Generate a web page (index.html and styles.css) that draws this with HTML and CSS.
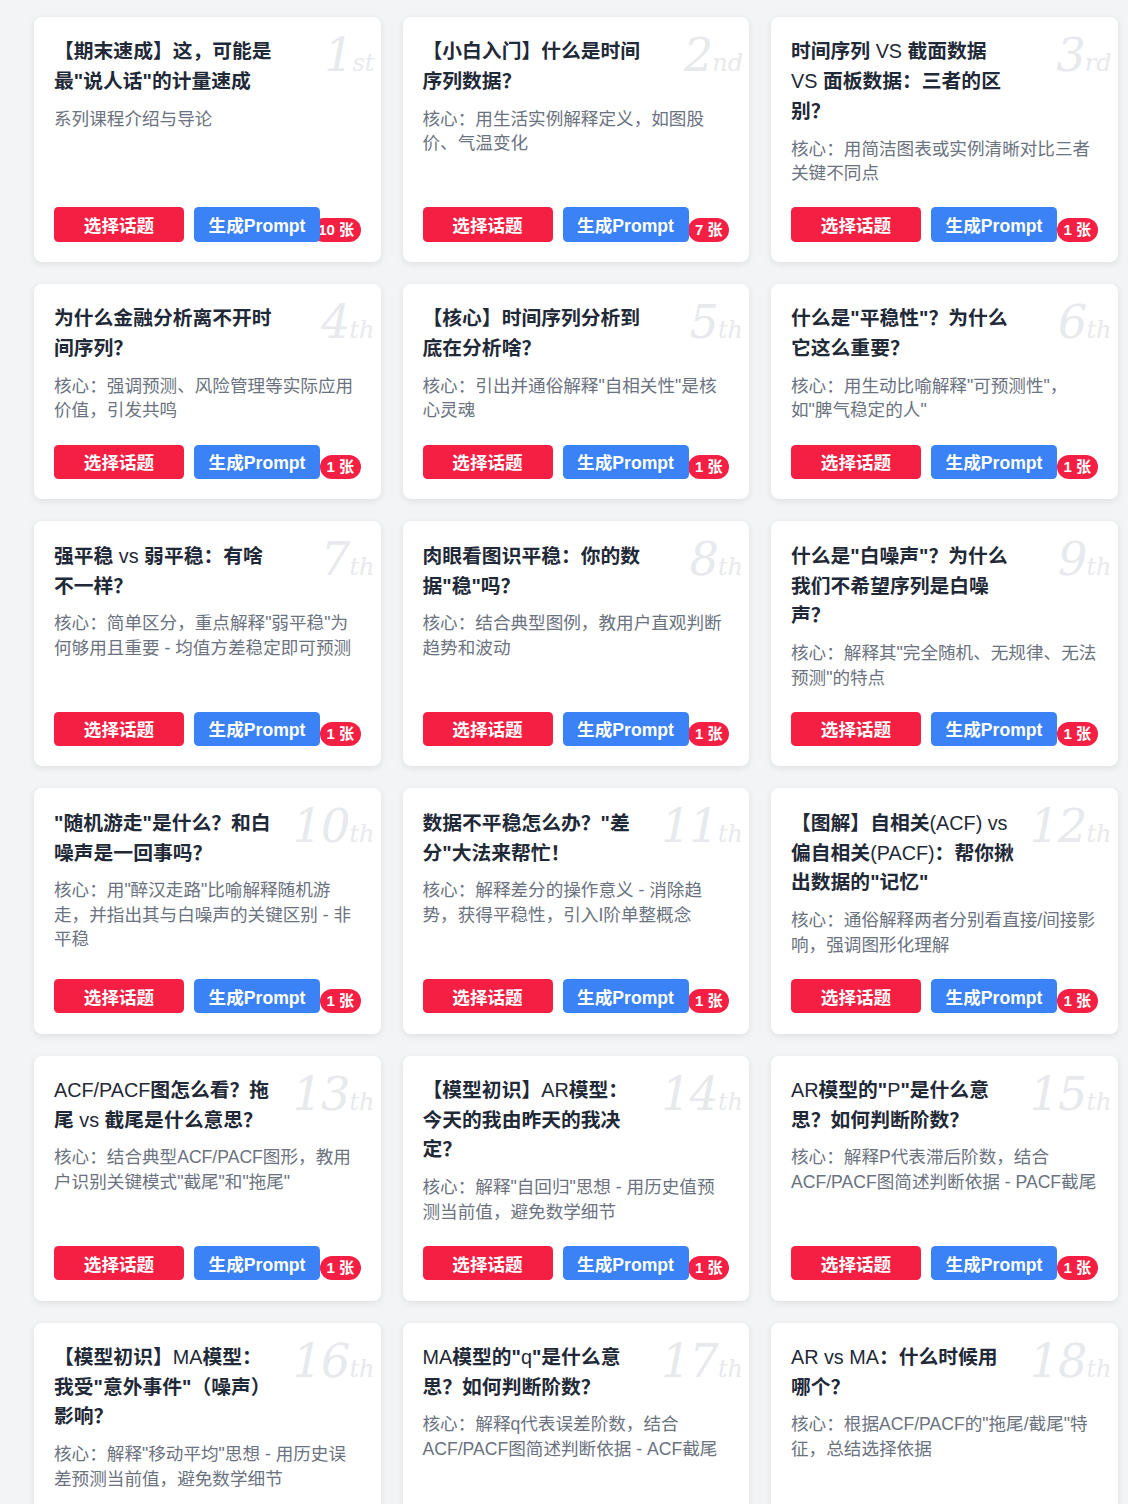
FILE: index.html
```html
<!DOCTYPE html>
<html lang="zh-CN">
<head>
<meta charset="utf-8">
<title>课程话题</title>
<link rel="stylesheet" href="styles.css">
</head>
<body>
<div class="grid">
  <div class="card"><div class="rank">1<span class="suf">st</span></div>
    <h3 class="title">【期末速成】这，可能是最"说人话"的计量速成</h3>
    <p class="desc">系列课程介绍与导论</p>
    <div class="actions"><span class="badge">10 张</span><button class="btn btn-red">选择话题</button><button class="btn btn-blue">生成Prompt</button></div>
  </div>
  <div class="card"><div class="rank">2<span class="suf">nd</span></div>
    <h3 class="title">【小白入门】什么是时间序列数据？</h3>
    <p class="desc">核心：用生活实例解释定义，如图股价、气温变化</p>
    <div class="actions"><span class="badge">7 张</span><button class="btn btn-red">选择话题</button><button class="btn btn-blue">生成Prompt</button></div>
  </div>
  <div class="card"><div class="rank">3<span class="suf">rd</span></div>
    <h3 class="title">时间序列 <span class="en">VS</span> 截面数据 <span class="en">VS</span> 面板数据：三者的区别？</h3>
    <p class="desc">核心：用简洁图表或实例清晰对比三者关键不同点</p>
    <div class="actions"><span class="badge">1 张</span><button class="btn btn-red">选择话题</button><button class="btn btn-blue">生成Prompt</button></div>
  </div>

  <div class="card"><div class="rank">4<span class="suf">th</span></div>
    <h3 class="title">为什么金融分析离不开时间序列？</h3>
    <p class="desc">核心：强调预测、风险管理等实际应用价值，引发共鸣</p>
    <div class="actions"><span class="badge">1 张</span><button class="btn btn-red">选择话题</button><button class="btn btn-blue">生成Prompt</button></div>
  </div>
  <div class="card"><div class="rank">5<span class="suf">th</span></div>
    <h3 class="title">【核心】时间序列分析到底在分析啥？</h3>
    <p class="desc">核心：引出并通俗解释"自相关性"是核心灵魂</p>
    <div class="actions"><span class="badge">1 张</span><button class="btn btn-red">选择话题</button><button class="btn btn-blue">生成Prompt</button></div>
  </div>
  <div class="card"><div class="rank">6<span class="suf">th</span></div>
    <h3 class="title">什么是"平稳性"？为什么它这么重要？</h3>
    <p class="desc">核心：用生动比喻解释"可预测性"，如"脾气稳定的人"</p>
    <div class="actions"><span class="badge">1 张</span><button class="btn btn-red">选择话题</button><button class="btn btn-blue">生成Prompt</button></div>
  </div>

  <div class="card"><div class="rank">7<span class="suf">th</span></div>
    <h3 class="title">强平稳 <span class="en">vs</span> 弱平稳：有啥不一样？</h3>
    <p class="desc">核心：简单区分，重点解释"弱平稳"为何够用且重要 - 均值方差稳定即可预测</p>
    <div class="actions"><span class="badge">1 张</span><button class="btn btn-red">选择话题</button><button class="btn btn-blue">生成Prompt</button></div>
  </div>
  <div class="card"><div class="rank">8<span class="suf">th</span></div>
    <h3 class="title">肉眼看图识平稳：你的数据"稳"吗？</h3>
    <p class="desc">核心：结合典型图例，教用户直观判断趋势和波动</p>
    <div class="actions"><span class="badge">1 张</span><button class="btn btn-red">选择话题</button><button class="btn btn-blue">生成Prompt</button></div>
  </div>
  <div class="card"><div class="rank">9<span class="suf">th</span></div>
    <h3 class="title">什么是"白噪声"？为什么我们不希望序列是白噪声？</h3>
    <p class="desc">核心：解释其"完全随机、无规律、无法预测"的特点</p>
    <div class="actions"><span class="badge">1 张</span><button class="btn btn-red">选择话题</button><button class="btn btn-blue">生成Prompt</button></div>
  </div>

  <div class="card"><div class="rank">10<span class="suf">th</span></div>
    <h3 class="title">"随机游走"是什么？和白噪声是一回事吗？</h3>
    <p class="desc">核心：用"醉汉走路"比喻解释随机游走，并指出其与白噪声的关键区别 - 非平稳</p>
    <div class="actions"><span class="badge">1 张</span><button class="btn btn-red">选择话题</button><button class="btn btn-blue">生成Prompt</button></div>
  </div>
  <div class="card"><div class="rank">11<span class="suf">th</span></div>
    <h3 class="title">数据不平稳怎么办？"差分"大法来帮忙！</h3>
    <p class="desc">核心：解释差分的操作意义 - 消除趋势，获得平稳性，引入I阶单整概念</p>
    <div class="actions"><span class="badge">1 张</span><button class="btn btn-red">选择话题</button><button class="btn btn-blue">生成Prompt</button></div>
  </div>
  <div class="card"><div class="rank">12<span class="suf">th</span></div>
    <h3 class="title">【图解】自相关<span class="en">(ACF) vs</span> 偏自相关<span class="en">(PACF)</span>：帮你揪出数据的"记忆"</h3>
    <p class="desc">核心：通俗解释两者分别看直接/间接影响，强调图形化理解</p>
    <div class="actions"><span class="badge">1 张</span><button class="btn btn-red">选择话题</button><button class="btn btn-blue">生成Prompt</button></div>
  </div>

  <div class="card"><div class="rank">13<span class="suf">th</span></div>
    <h3 class="title"><span class="en">ACF/PACF</span>图怎么看？拖尾 <span class="en">vs</span> 截尾是什么意思？</h3>
    <p class="desc">核心：结合典型ACF/PACF图形，教用户识别关键模式"截尾"和"拖尾"</p>
    <div class="actions"><span class="badge">1 张</span><button class="btn btn-red">选择话题</button><button class="btn btn-blue">生成Prompt</button></div>
  </div>
  <div class="card"><div class="rank">14<span class="suf">th</span></div>
    <h3 class="title">【模型初识】<span class="en">AR</span>模型：今天的我由昨天的我决定？</h3>
    <p class="desc">核心：解释"自回归"思想 - 用历史值预测当前值，避免数学细节</p>
    <div class="actions"><span class="badge">1 张</span><button class="btn btn-red">选择话题</button><button class="btn btn-blue">生成Prompt</button></div>
  </div>
  <div class="card"><div class="rank">15<span class="suf">th</span></div>
    <h3 class="title"><span class="en">AR</span>模型的"<span class="en">P</span>"是什么意思？如何判断阶数？</h3>
    <p class="desc">核心：解释P代表滞后阶数，结合ACF/PACF图简述判断依据 - PACF截尾</p>
    <div class="actions"><span class="badge">1 张</span><button class="btn btn-red">选择话题</button><button class="btn btn-blue">生成Prompt</button></div>
  </div>

  <div class="card"><div class="rank">16<span class="suf">th</span></div>
    <h3 class="title">【模型初识】<span class="en">MA</span>模型：我受"意外事件"（噪声）影响？</h3>
    <p class="desc">核心：解释"移动平均"思想 - 用历史误差预测当前值，避免数学细节</p>
    <div class="actions"><span class="badge">1 张</span><button class="btn btn-red">选择话题</button><button class="btn btn-blue">生成Prompt</button></div>
  </div>
  <div class="card"><div class="rank">17<span class="suf">th</span></div>
    <h3 class="title"><span class="en">MA</span>模型的"<span class="en">q</span>"是什么意思？如何判断阶数？</h3>
    <p class="desc">核心：解释q代表误差阶数，结合ACF/PACF图简述判断依据 - ACF截尾</p>
    <div class="actions"><span class="badge">1 张</span><button class="btn btn-red">选择话题</button><button class="btn btn-blue">生成Prompt</button></div>
  </div>
  <div class="card"><div class="rank">18<span class="suf">th</span></div>
    <h3 class="title"><span class="en">AR vs MA</span>：什么时候用哪个？</h3>
    <p class="desc">核心：根据ACF/PACF的"拖尾/截尾"特征，总结选择依据</p>
    <div class="actions"><span class="badge">1 张</span><button class="btn btn-red">选择话题</button><button class="btn btn-blue">生成Prompt</button></div>
  </div>
</div>
</body>
</html>
```

FILE: styles.css
```css
html, body {
  margin: 0;
  padding: 0;
  background: #f3f4f6;
}

body {
  padding: 17px 0 40px 34px;
  font-family: "Liberation Sans", "Noto Sans CJK SC", sans-serif;
}

.grid {
  display: grid;
  grid-template-columns: repeat(3, 346.5px);
  gap: 22px;
}

.card {
  position: relative;
  display: flex;
  flex-direction: column;
  background: #ffffff;
  border-radius: 8px;
  box-shadow: 0 2px 7px rgba(0, 0, 0, 0.09);
  padding: 20.4px 20px 20.2px 20px;
  overflow: hidden;
}

.rank {
  position: absolute;
  top: 14px;
  right: 6px;
  font-family: "DejaVu Serif", "Liberation Serif", serif;
  font-style: italic;
  font-size: 46px;
  line-height: 48px;
  color: #e8e9ec;
  white-space: nowrap;
  letter-spacing: -1px;
}

.suf {
  font-size: 24px;
  letter-spacing: 0;
}

.title {
  position: relative;
  margin: 0 0 10px 0;
  max-width: 224px;
  font-size: 19.8px;
  line-height: 29.7px;
  font-weight: 700;
  color: #1f2937;
}

.en {
  font-weight: 400;
}

.desc {
  margin: 0 0 21.5px 0;
  font-size: 17.6px;
  line-height: 24.6px;
  color: #6b7280;
}

.actions {
  position: relative;
  margin-top: auto;
  display: flex;
  gap: 10px;
  height: 34.7px;
}

.btn {
  z-index: 1;
  border: none;
  border-radius: 4.5px;
  height: 34.7px;
  padding: 0;
  font-family: "Liberation Sans", "Noto Sans CJK SC", sans-serif;
  font-size: 17.6px;
  font-weight: 700;
  color: #ffffff;
  text-align: center;
}

.btn-red {
  width: 130px;
  background: #f51f43;
}

.btn-blue {
  width: 126px;
  background: #3b82f6;
}

.badge {
  position: absolute;
  right: 0;
  bottom: 0;
  height: 24px;
  line-height: 24px;
  padding: 0 6.5px;
  border-radius: 12px;
  background: #f51f43;
  color: #ffffff;
  font-size: 15px;
  font-weight: 700;
  white-space: nowrap;
}
```
